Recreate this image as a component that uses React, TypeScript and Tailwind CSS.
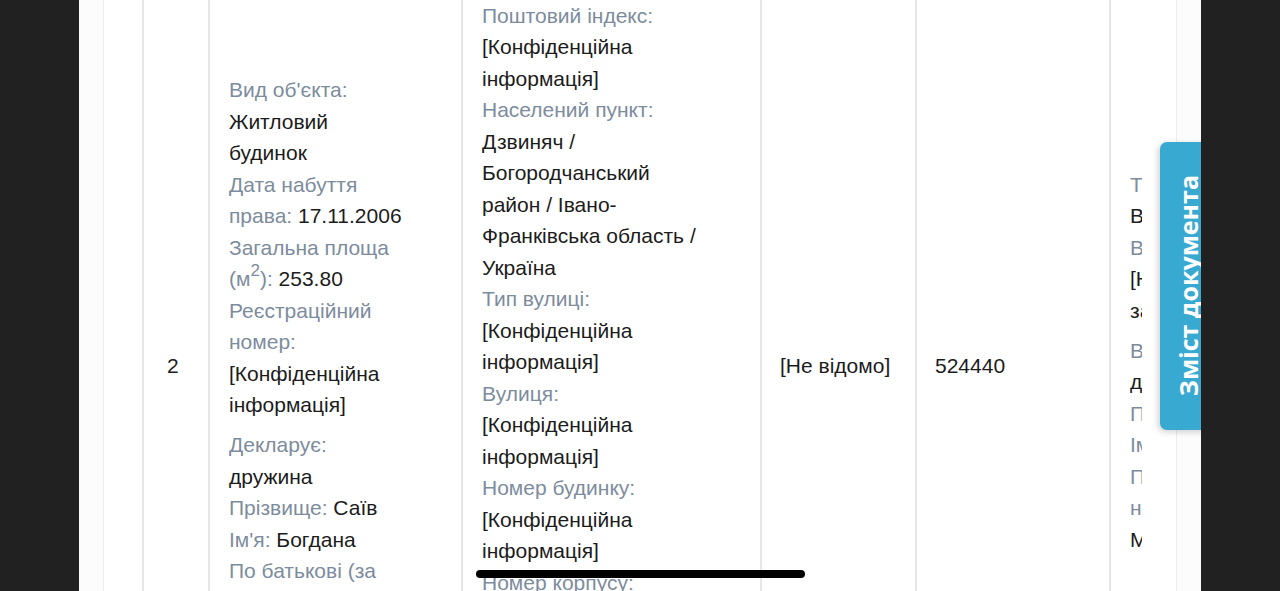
import type { ReactNode } from 'react';

const font = { fontFamily: '"Liberation Sans", Arial, sans-serif' };

function Label({ children }: { children: ReactNode }) {
  return <span className="text-[#7d8c9d]">{children}</span>;
}

// One label/value pair, written inline so it wraps like the page does
function Field({ label, children }: { label: ReactNode; children?: ReactNode }) {
  return (
    <span>
      <Label>{label}</Label> {children}
      <br />
    </span>
  );
}

function Group({ children }: { children: ReactNode }) {
  return <div className="mb-[8.5px]">{children}</div>;
}

function Cell({ width, pad = 'pl-[18px]', children }: { width: string; pad?: string; children?: ReactNode }) {
  return (
    <div className={`${width} ${pad} shrink-0 flex items-center border-l-2 border-[#e6e6e6] pr-4 py-3`}>
      {children}
    </div>
  );
}

export default function App() {
  return (
    <div
      className="relative h-[591px] w-[1280px] overflow-hidden bg-[#212121] flex text-[21px] leading-[31.5px] text-[#1c1c1c]"
      style={font}
    >
      <div className="w-[79px] shrink-0" />

      {/* Page */}
      <div className="w-[1122px] shrink-0 bg-[#fcfcfc] pl-6 pr-6 overflow-hidden">
        <div className="h-full bg-white border-x border-[#ececec] pl-[38px] pr-[34px] overflow-hidden">
          <div className="overflow-hidden mt-[-44px]">
            <div className="flex w-[1200px]">
              <Cell width="w-[66px]">
                <span className="pl-[5px]">2</span>
              </Cell>

              <Cell width="w-[253px]" pad="pl-[19px]">
                <div className="w-[180px]">
                  <Group>
                    <Field label="Вид об'єкта:">Житловий будинок</Field>
                    <Field label="Дата набуття права:">17.11.2006</Field>
                    <Field
                      label={
                        <>
                          Загальна площа (м<sup className="text-[17px] top-[-0.6em]">2</sup>):
                        </>
                      }
                    >
                      253.80
                    </Field>
                    <Field label="Реєстраційний номер:">[Конфіденційна інформація]</Field>
                  </Group>
                  <Group>
                    <Field label="Декларує:">дружина</Field>
                    <Field label="Прізвище:">Саїв</Field>
                    <Field label="Ім'я:">Богдана</Field>
                    <Field label="По батькові (за наявності):">Михайлівна</Field>
                  </Group>
                </div>
              </Cell>

              <Cell width="w-[299px]" pad="pl-[19px]">
                <div className="w-[226px]">
                  <Group>
                    <Field label="Країна:">Україна</Field>
                    <Field label="Поштовий індекс:">[Конфіденційна інформація]</Field>
                    <Field label="Населений пункт:">
                      Дзвиняч / Богородчанський район / Івано-Франківська область / Україна
                    </Field>
                    <Field label="Тип вулиці:">[Конфіденційна інформація]</Field>
                    <Field label="Вулиця:">[Конфіденційна інформація]</Field>
                    <Field label="Номер будинку:">[Конфіденційна інформація]</Field>
                    <Field label="Номер корпусу:">[Конфіденційна інформація]</Field>
                    <Field label="Номер квартири:">[Конфіденційна інформація]</Field>
                  </Group>
                </div>
              </Cell>

              <Cell width="w-[155px]">[Не відомо]</Cell>

              <Cell width="w-[194px]">524440</Cell>

              <Cell width="w-[260px]" pad="pl-[19px]">
                <div className="w-[180px]">
                  <Group>
                    <Field label="Тип права:">Власність</Field>
                    <Field label="Вартість набуття:">[Не застосовується]</Field>
                  </Group>
                  <Group>
                    <Field label="Власник об'єкта:">дружина</Field>
                    <Field label="Прізвище:">Саїв</Field>
                    <Field label="Ім'я:">Богдана</Field>
                    <Field label="По батькові (за наявності):">Михайлівна</Field>
                  </Group>
                </div>
              </Cell>
            </div>
          </div>
        </div>
      </div>

      <div className="relative z-20 flex-1 bg-[#212121]" />

      {/* Contents tab */}
      <div className="absolute z-10 left-[1160px] top-[142px] w-[56px] h-[288px] rounded-l-[7px] bg-[#38a9d1] shadow-[-2px_2px_6px_rgba(0,0,0,0.18)] flex items-center justify-center">
        <span
          className="[writing-mode:vertical-rl] rotate-180 text-white font-bold text-[25px] leading-none"
          style={{ fontFamily: '"Open Sans", Arial, sans-serif' }}
        >
          Зміст документа
        </span>
      </div>

      {/* Home indicator */}
      <div className="absolute z-30 left-[476px] top-[570px] w-[329px] h-[8px] rounded-full bg-black" />
    </div>
  );
}
